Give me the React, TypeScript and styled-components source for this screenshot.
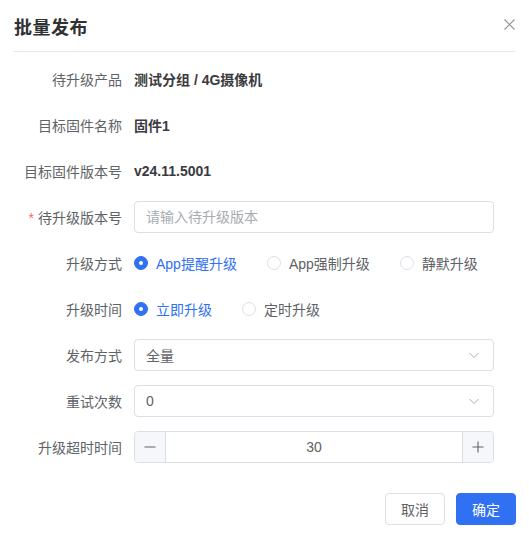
import styled, { createGlobalStyle } from 'styled-components';

const GlobalStyle = createGlobalStyle`
  html, body {
    margin: 0;
    padding: 0;
    background: #fff;
  }
  body {
    font-family: "Liberation Sans", "Noto Sans CJK SC", sans-serif;
    color: #303133;
  }
`;

const Dialog = styled.div`
  width: 529px;
  height: 538px;
  box-sizing: border-box;
  background: #fff;
`;

const Header = styled.div`
  display: flex;
  align-items: center;
  justify-content: space-between;
  height: 52px;
  margin: 0 13px 0 14px;
  border-bottom: 1px solid #e4e7ed;
  box-sizing: border-box;
`;

const Title = styled.h2`
  margin: 0;
  font-size: 18px;
  font-weight: 700;
  color: #303133;
  letter-spacing: 0.5px;
`;

const Close = styled.button`
  border: 0;
  background: none;
  padding: 0;
  margin: 0 0 3px;
  width: 14px;
  height: 14px;
  display: flex;
  align-items: center;
  justify-content: center;
  cursor: pointer;
`;

const Form = styled.div`
  display: flex;
  flex-direction: column;
  gap: 14px;
  padding: 11px 35px 0 14px;
`;

const Row = styled.div`
  display: grid;
  grid-template-columns: 108px 1fr;
  column-gap: 12px;
  align-items: center;
  height: 32px;
`;

const Label = styled.label`
  text-align: right;
  font-size: 14px;
  color: #606266;
  white-space: nowrap;
`;

const Star = styled.span`
  color: #f56c6c;
  margin-right: 4px;
`;

const Value = styled.div`
  font-size: 14px;
  font-weight: 700;
  color: #3a3b3e;
`;

const Input = styled.input`
  height: 32px;
  box-sizing: border-box;
  border: 1px solid #dcdfe6;
  border-radius: 4px;
  padding: 0 11px;
  font-size: 14px;
  font-family: inherit;
  color: #606266;
  outline: none;
  &::placeholder {
    color: #a8abb2;
  }
`;

const RadioGroup = styled.div`
  display: flex;
  align-items: center;
  gap: 30px;
`;

const RadioItem = styled.label<{ $checked?: boolean }>`
  display: flex;
  align-items: center;
  gap: 8px;
  font-size: 14px;
  color: ${(p) => (p.$checked ? '#3070f2' : '#606266')};
  cursor: pointer;
`;

const Dot = styled.span<{ $checked?: boolean }>`
  width: 14px;
  height: 14px;
  box-sizing: border-box;
  border-radius: 50%;
  border: 1px solid ${(p) => (p.$checked ? '#3070f2' : '#dcdfe6')};
  background: ${(p) => (p.$checked ? '#3070f2' : '#fff')};
  display: flex;
  align-items: center;
  justify-content: center;
  &::after {
    content: '';
    width: 4px;
    height: 4px;
    border-radius: 50%;
    background: #fff;
    display: ${(p) => (p.$checked ? 'block' : 'none')};
  }
`;

const Select = styled.div`
  height: 32px;
  box-sizing: border-box;
  border: 1px solid #dcdfe6;
  border-radius: 4px;
  padding: 0 12px 0 11px;
  display: flex;
  align-items: center;
  justify-content: space-between;
  font-size: 14px;
  color: #606266;
`;

const NumberBox = styled.div`
  height: 32px;
  box-sizing: border-box;
  border: 1px solid #dcdfe6;
  border-radius: 4px;
  display: flex;
  overflow: hidden;
`;

const Step = styled.button`
  width: 31px;
  border: 0;
  padding: 0;
  background: #f5f7fa;
  display: flex;
  align-items: center;
  justify-content: center;
  cursor: pointer;
  &:first-child {
    border-right: 1px solid #dcdfe6;
  }
  &:last-child {
    border-left: 1px solid #dcdfe6;
  }
`;

const NumberValue = styled.div`
  flex: 1;
  display: flex;
  align-items: center;
  justify-content: center;
  font-size: 14px;
  color: #606266;
`;

const Footer = styled.div`
  display: flex;
  justify-content: flex-end;
  gap: 11px;
  padding: 30px 13px 0 0;
`;

const Button = styled.button<{ $primary?: boolean }>`
  height: 32px;
  padding: 0 15px;
  border-radius: 4px;
  font-size: 14px;
  font-family: inherit;
  border: 1px solid ${(p) => (p.$primary ? '#3070f2' : '#dcdfe6')};
  background: ${(p) => (p.$primary ? '#3070f2' : '#fff')};
  color: ${(p) => (p.$primary ? '#fff' : '#606266')};
  cursor: pointer;
`;

function Chevron() {
  return (
    <svg width="14" height="14" viewBox="0 0 14 14" fill="none">
      <path d="M2.5 5 L7 9.5 L11.5 5" stroke="#a8abb2" strokeWidth="1" />
    </svg>
  );
}

function Radio({ label, checked }: { label: string; checked?: boolean }) {
  return (
    <RadioItem $checked={checked}>
      <Dot $checked={checked} />
      {label}
    </RadioItem>
  );
}

export default function App() {
  return (
    <Dialog>
      <GlobalStyle />
      <Header>
        <Title>批量发布</Title>
        <Close aria-label="close">
          <svg width="11" height="11" viewBox="0 0 11 11">
            <path d="M0.5 0.5 L10.5 10.5 M10.5 0.5 L0.5 10.5" stroke="#909399" strokeWidth="1.1" />
          </svg>
        </Close>
      </Header>
      <Form>
        <Row>
          <Label>待升级产品</Label>
          <Value>测试分组 / 4G摄像机</Value>
        </Row>
        <Row>
          <Label>目标固件名称</Label>
          <Value>固件1</Value>
        </Row>
        <Row>
          <Label>目标固件版本号</Label>
          <Value>v24.11.5001</Value>
        </Row>
        <Row>
          <Label>
            <Star>*</Star>待升级版本号
          </Label>
          <Input placeholder="请输入待升级版本" />
        </Row>
        <Row>
          <Label>升级方式</Label>
          <RadioGroup>
            <Radio label="App提醒升级" checked />
            <Radio label="App强制升级" />
            <Radio label="静默升级" />
          </RadioGroup>
        </Row>
        <Row>
          <Label>升级时间</Label>
          <RadioGroup>
            <Radio label="立即升级" checked />
            <Radio label="定时升级" />
          </RadioGroup>
        </Row>
        <Row>
          <Label>发布方式</Label>
          <Select>
            全量
            <Chevron />
          </Select>
        </Row>
        <Row>
          <Label>重试次数</Label>
          <Select>
            0
            <Chevron />
          </Select>
        </Row>
        <Row>
          <Label>升级超时时间</Label>
          <NumberBox>
            <Step aria-label="decrease">
              <svg width="14" height="14" viewBox="0 0 14 14">
                <path d="M1.5 7 H12.5" stroke="#606266" strokeWidth="1.1" />
              </svg>
            </Step>
            <NumberValue>30</NumberValue>
            <Step aria-label="increase">
              <svg width="14" height="14" viewBox="0 0 14 14">
                <path d="M1.5 7 H12.5 M7 1.5 V12.5" stroke="#606266" strokeWidth="1.1" />
              </svg>
            </Step>
          </NumberBox>
        </Row>
      </Form>
      <Footer>
        <Button>取消</Button>
        <Button $primary>确定</Button>
      </Footer>
    </Dialog>
  );
}
